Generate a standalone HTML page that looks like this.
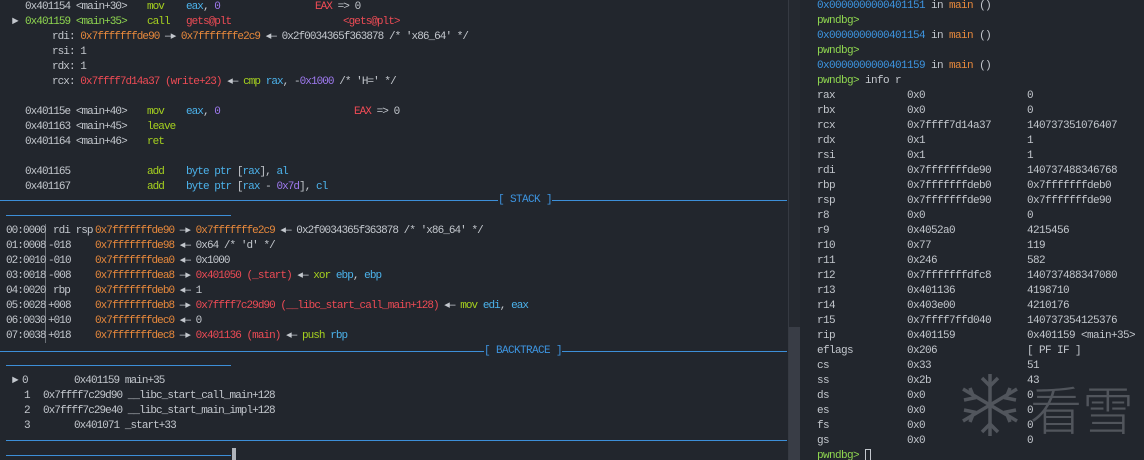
<!DOCTYPE html>
<html><head><meta charset="utf-8"><style>
html,body{margin:0;padding:0;background:#22262d;width:1144px;height:460px;overflow:hidden;position:relative}
.L,.R{position:absolute;white-space:pre;font-family:"Liberation Mono",monospace;color:#c3c7cd}
.L{font-size:11px;line-height:14px;letter-spacing:-0.95px}
.R{font-size:11px;line-height:15px;letter-spacing:-0.6px}
.g{color:#a6d11f}.b{color:#4cb3ec}.p{color:#9f7af0}.r{color:#ee4b55}.o{color:#e8893c}.ga{color:#8fd650}.bl{color:#3d94e0}.pw{color:#8fd650}
.hl{position:absolute;height:1px;background:#3d8fd8}
.tag{position:absolute;font-family:"Liberation Mono",monospace;font-size:11px;color:#3d94e0;white-space:pre;line-height:14px;background:#22262d;letter-spacing:-0.6px}
</style></head><body>
<div style="position:absolute;left:788px;top:0;width:1px;height:460px;background:#363a42"></div>
<div style="position:absolute;left:789px;top:0;width:11px;height:460px;background:#252930"></div>
<div style="position:absolute;left:789px;top:327px;width:11px;height:133px;background:#393d46"></div>

<div class="L" style="left:25px;top:0">0x401154 &lt;main+30&gt;</div><div class="L g" style="left:147px;top:0">mov</div><div class="L" style="left:186px;top:0"><span class="b">eax</span>, <span class="p">0</span></div><div class="L" style="left:315px;top:0"><span class="r">EAX</span> =&gt; 0</div>
<div class="L" style="left:12px;top:15px">►</div><div class="L ga" style="left:25px;top:15px">0x401159 &lt;main+35&gt;</div><div class="L g" style="left:147px;top:15px">call</div><div class="L r" style="left:186px;top:15px">gets@plt</div><div class="L r" style="left:343px;top:15px">&lt;gets@plt&gt;</div>
<div class="L" style="left:52px;top:30px">rdi: <span class="o">0x7fffffffde90</span> —▸ <span class="o">0x7fffffffe2c9</span> ◂— 0x2f0034365f363878 /* 'x86_64' */</div>
<div class="L" style="left:52px;top:45px">rsi: 1</div>
<div class="L" style="left:52px;top:60px">rdx: 1</div>
<div class="L" style="left:52px;top:75px">rcx: <span class="r">0x7ffff7d14a37 (write+23)</span> ◂— <span class="g">cmp</span> <span class="b">rax</span>, -<span class="p">0x1000</span> /* 'H=' */</div>
<div class="L" style="left:25px;top:105px">0x40115e &lt;main+40&gt;</div><div class="L g" style="left:147px;top:105px">mov</div><div class="L" style="left:186px;top:105px"><span class="b">eax</span>, <span class="p">0</span></div><div class="L" style="left:354px;top:105px"><span class="r">EAX</span> =&gt; 0</div>
<div class="L" style="left:25px;top:120px">0x401163 &lt;main+45&gt;</div><div class="L g" style="left:147px;top:120px">leave</div>
<div class="L" style="left:25px;top:135px">0x401164 &lt;main+46&gt;</div><div class="L g" style="left:147px;top:135px">ret</div>
<div class="L" style="left:25px;top:165px">0x401165</div><div class="L g" style="left:147px;top:165px">add</div><div class="L" style="left:186px;top:165px"><span class="b">byte ptr</span> [<span class="b">rax</span>], <span class="b">al</span></div>
<div class="L" style="left:25px;top:180px">0x401167</div><div class="L g" style="left:147px;top:180px">add</div><div class="L" style="left:186px;top:180px"><span class="b">byte ptr</span> [<span class="b">rax</span> - <span class="p">0x7d</span>], <span class="b">cl</span></div>

<div class="hl" style="left:0;top:200px;width:787px"></div>
<div class="tag" style="left:498px;top:193px">[ STACK ]</div>
<div class="hl" style="left:6px;top:215px;width:225px"></div>

<div style="position:absolute;left:45px;top:224px;width:1px;height:119px;background:#6b6f76"></div>
<div class="L" style="left:6px;top:224px">00:0000</div><div class="L" style="left:53px;top:224px">rdi rsp</div><div class="L" style="left:95px;top:224px"><span class="o">0x7fffffffde90</span> —▸ <span class="o">0x7fffffffe2c9</span> ◂— 0x2f0034365f363878 /* 'x86_64' */</div>
<div class="L" style="left:6px;top:239px">01:0008</div><div class="L" style="left:48px;top:239px">-018</div><div class="L" style="left:95px;top:239px"><span class="o">0x7fffffffde98</span> ◂— 0x64 /* 'd' */</div>
<div class="L" style="left:6px;top:254px">02:0010</div><div class="L" style="left:48px;top:254px">-010</div><div class="L" style="left:95px;top:254px"><span class="o">0x7fffffffdea0</span> ◂— 0x1000</div>
<div class="L" style="left:6px;top:269px">03:0018</div><div class="L" style="left:48px;top:269px">-008</div><div class="L" style="left:95px;top:269px"><span class="o">0x7fffffffdea8</span> —▸ <span class="r">0x401050 (_start)</span> ◂— <span class="g">xor</span> <span class="b">ebp</span>, <span class="b">ebp</span></div>
<div class="L" style="left:6px;top:284px">04:0020</div><div class="L" style="left:53px;top:284px">rbp</div><div class="L" style="left:95px;top:284px"><span class="o">0x7fffffffdeb0</span> ◂— 1</div>
<div class="L" style="left:6px;top:299px">05:0028</div><div class="L" style="left:48px;top:299px">+008</div><div class="L" style="left:95px;top:299px"><span class="o">0x7fffffffdeb8</span> —▸ <span class="r">0x7ffff7c29d90 (__libc_start_call_main+128)</span> ◂— <span class="g">mov</span> <span class="b">edi</span>, <span class="b">eax</span></div>
<div class="L" style="left:6px;top:314px">06:0030</div><div class="L" style="left:48px;top:314px">+010</div><div class="L" style="left:95px;top:314px"><span class="o">0x7fffffffdec0</span> ◂— 0</div>
<div class="L" style="left:6px;top:329px">07:0038</div><div class="L" style="left:48px;top:329px">+018</div><div class="L" style="left:95px;top:329px"><span class="o">0x7fffffffdec8</span> —▸ <span class="r">0x401136 (main)</span> ◂— <span class="g">push</span> <span class="b">rbp</span></div>

<div class="hl" style="left:0;top:351px;width:787px"></div>
<div class="tag" style="left:484px;top:344px">[ BACKTRACE ]</div>
<div class="hl" style="left:6px;top:365px;width:225px"></div>

<div class="L" style="left:12px;top:374px">►</div><div class="L" style="left:22px;top:374px">0</div><div class="L" style="left:74px;top:374px">0x401159 main+35</div>
<div class="L" style="left:24px;top:389px">1</div><div class="L" style="left:43px;top:389px">0x7ffff7c29d90 __libc_start_call_main+128</div>
<div class="L" style="left:24px;top:404px">2</div><div class="L" style="left:43px;top:404px">0x7ffff7c29e40 __libc_start_main_impl+128</div>
<div class="L" style="left:24px;top:419px">3</div><div class="L" style="left:74px;top:419px">0x401071 _start+33</div>

<div class="hl" style="left:6px;top:440px;width:781px"></div>
<div class="hl" style="left:6px;top:455px;width:225px"></div>
<div style="position:absolute;left:232px;top:448px;width:4px;height:12px;background:#b0b4ba"></div>

<div class="R" style="left:817px;top:-1px"><span class="bl">0x0000000000401151</span> in <span class="o">main</span> ()
<span class="pw">pwndbg&gt;</span>
<span class="bl">0x0000000000401154</span> in <span class="o">main</span> ()
<span class="pw">pwndbg&gt;</span>
<span class="bl">0x0000000000401159</span> in <span class="o">main</span> ()
<span class="pw">pwndbg&gt;</span> info r
rax            0x0                 0
rbx            0x0                 0
rcx            0x7ffff7d14a37      140737351076407
rdx            0x1                 1
rsi            0x1                 1
rdi            0x7fffffffde90      140737488346768
rbp            0x7fffffffdeb0      0x7fffffffdeb0
rsp            0x7fffffffde90      0x7fffffffde90
r8             0x0                 0
r9             0x4052a0            4215456
r10            0x77                119
r11            0x246               582
r12            0x7fffffffdfc8      140737488347080
r13            0x401136            4198710
r14            0x403e00            4210176
r15            0x7ffff7ffd040      140737354125376
rip            0x401159            0x401159 &lt;main+35&gt;
eflags         0x206               [ PF IF ]
cs             0x33                51
ss             0x2b                43
ds             0x0                 0
es             0x0                 0
fs             0x0                 0
gs             0x0                 0
<span class="pw">pwndbg&gt;</span></div>
<div style="position:absolute;left:865px;top:449px;width:6px;height:12px;border:1px solid #c3c7cd;box-sizing:border-box"></div>

<svg style="position:absolute;left:960px;top:372px" width="60" height="66" viewBox="0 0 60 66" stroke="#5d6168" stroke-width="3.5" fill="none" opacity="0.8">
<line x1="30" y1="2" x2="30" y2="64"/><line x1="3" y1="17" x2="57" y2="49"/><line x1="3" y1="49" x2="57" y2="17"/>
<polyline points="22,6 30,14 38,6"/><polyline points="22,60 30,52 38,60"/>
<polyline points="4,28 14,26 10,16"/><polyline points="56,38 46,40 50,50"/>
<polyline points="4,38 14,40 10,50"/><polyline points="56,28 46,26 50,16"/>
</svg>
<div style="position:absolute;left:1030px;top:378px;font-family:'Noto Sans CJK SC',sans-serif;font-size:52px;line-height:60px;color:#5d6168;opacity:0.8;font-weight:300">看雪</div>
</body></html>
